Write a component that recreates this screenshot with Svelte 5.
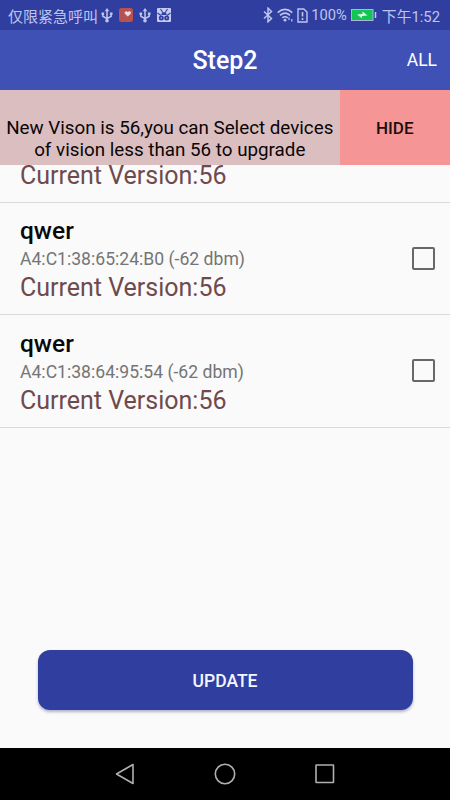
<script lang="ts">
  interface IDevice {
    name: string;
    mac: string;
    rssi: number;
    version: number;
    checked: boolean;
  }

  // version of the row that is scrolled under the notice
  let scrolledVersion = 56;
  let devices: IDevice[] = [
    { name: "qwer", mac: "A4:C1:38:65:24:B0", rssi: -62, version: 56, checked: false },
    { name: "qwer", mac: "A4:C1:38:64:95:54", rssi: -62, version: 56, checked: false },
  ];
  let showNotice = true;

  function selectAll() {
    devices = devices.map((d) => ({ ...d, checked: true }));
  }
</script>

{#snippet usb()}
  <svg width="12" height="15" viewBox="0 0 12 15">
    <path d="M6 2v11M1.800 6v2.200L6 10.600l4.200-2.400V6" fill="none" stroke="currentColor" stroke-width="1.500" />
    <path d="M6 0l2.300 3.300H3.700zM.5 4.600h2.600v2.500H.5zM8.900 4.600h2.600v2.500H8.900z" fill="currentColor" />
    <circle cx="6" cy="12.800" r="1.800" fill="currentColor" />
  </svg>
{/snippet}

<div class="screen">
  <div class="status">
    <div class="status-left">
      <span class="carrier">仅限紧急呼叫</span>
      {@render usb()}
      <svg width="14" height="14" viewBox="0 0 14 14">
        <rect width="14" height="14" rx="2.500" fill="#b6524f" />
        <path d="M8.800 8.600L5.900 5.700c-1.100-1.900 1.400-3.600 2.900-1.700 1.500-1.900 4-.2 2.900 1.700z" fill="#f0dce6" />
      </svg>
      {@render usb()}
      <svg width="14" height="14" viewBox="0 0 14 14">
        <rect width="14" height="14" rx="1" fill="#c5cbf0" />
        <path d="M3.500 1l2 3M10.500 1l-2 3M.5 5l3.500 2.500M13.500 5L10 7.500" fill="none" stroke="#303f9f" stroke-width="1.100" />
        <path d="M5 4.200h4l.7 2.800H4.300z" fill="#303f9f" />
        <circle cx="4.300" cy="10" r="2.500" fill="#303f9f" />
        <circle cx="9.700" cy="10" r="2.500" fill="#303f9f" />
        <circle cx="4.300" cy="10" r=".7" fill="#c5cbf0" />
        <circle cx="9.700" cy="10" r=".7" fill="#c5cbf0" />
      </svg>
    </div>
    <div class="status-right">
      <svg width="10" height="16" viewBox="0 0 10 16">
        <path d="M1 4.500l7.500 7L5 14.800V1.200l3.500 3.300L1 11.500" fill="none" stroke="currentColor" stroke-width="1.500" />
      </svg>
      <svg class="wifi" width="17" height="14" viewBox="0 0 17 14">
        <path
          d="M.7 4.600q7.300-6.400 14.600 0M3 7.300q5-4.400 10 0M5.300 9.900q2.700-2.300 5.400 0"
          fill="none"
          stroke="currentColor"
          stroke-width="1.600"
        />
        <circle cx="8" cy="12.200" r="1.400" fill="currentColor" />
        <path d="M12 9.500v2.500M14.800 11v2.500" stroke="currentColor" stroke-width="1.200" />
      </svg>
      <svg class="sim" width="11" height="15" viewBox="0 0 11 15">
        <path d="M1 1h5.800L10 4v10H1z" fill="none" stroke="currentColor" stroke-width="1.400" />
        <path d="M5.500 4v4.500M5.500 10v2" stroke="currentColor" stroke-width="1.600" />
      </svg>
      <span class="percent">100%</span>
      <svg class="battery" width="26" height="12" viewBox="0 0 26 12">
        <rect x=".5" y=".5" width="21.500" height="11" fill="#12c653" stroke="#a9b5dc" />
        <path d="M6 5.500l5.500-.5V2.500l5 4-5.500.4v2.400z" fill="#e4f8ee" />
        <path d="M24.500 3v6" stroke="#c5cbf0" stroke-width="1.500" />
      </svg>
      <span class="time">下午1:52</span>
    </div>
  </div>

  <header>
    <h1>Step2</h1>
    <button class="all" on:click={selectAll}>ALL</button>
  </header>

  {#if showNotice}
    <div class="notice">
      <p>New Vison is 56,you can Select devices<br />of vision less than 56 to upgrade</p>
      <button class="hide" on:click={() => (showNotice = false)}>HIDE</button>
    </div>
  {/if}

  <ul>
    <li class="scrolled">
      <span class="version">Current Version:{scrolledVersion}</span>
    </li>
    {#each devices as device}
      <li>
        <div class="info">
          <h2>{device.name}</h2>
          <span class="mac">{device.mac} ({device.rssi} dbm)</span>
          <span class="version">Current Version:{device.version}</span>
        </div>
        <input type="checkbox" aria-label={device.mac} bind:checked={device.checked} />
      </li>
    {/each}
  </ul>

  <div class="action">
    <button class="update">UPDATE</button>
  </div>

  <nav>
    <svg width="20" height="22" viewBox="0 0 20 22">
      <path d="M18 1.500v19L1.500 11z" />
    </svg>
    <svg width="22" height="22" viewBox="0 0 22 22">
      <circle cx="11" cy="11" r="9.700" />
    </svg>
    <svg width="20" height="20" viewBox="0 0 20 20">
      <rect x="1" y="1" width="17.500" height="17.500" rx=".5" />
    </svg>
  </nav>
</div>

<style>
  :global(body) {
    margin: 0;
  }
  .screen {
    display: flex;
    flex-direction: column;
    width: 450px;
    height: 800px;
    overflow: hidden;
    background: #fafafa;
    font-family: Roboto, "Noto Sans CJK SC", sans-serif;
  }
  button {
    border: none;
    font-family: inherit;
    cursor: pointer;
  }
  h1,
  h2,
  p,
  ul {
    margin: 0;
    padding: 0;
  }

  .status {
    display: flex;
    justify-content: space-between;
    box-sizing: border-box;
    height: 30px;
    padding: 0 10px 0 8px;
    background: #303f9f;
    color: #bdc5ef;
    white-space: nowrap;
  }
  .status-left,
  .status-right {
    display: flex;
    align-items: center;
  }
  .status-left {
    gap: 6px;
  }
  .carrier {
    font-size: 15px;
    margin-right: -3px;
  }
  .wifi {
    margin-left: 4px;
  }
  .sim {
    margin: 0 3px 0 3px;
  }
  .percent {
    font-size: 14.700px;
  }
  .battery {
    margin: 0 5px 0 4px;
  }
  .time {
    font-size: 14.800px;
  }

  header {
    display: grid;
    grid-template-columns: 1fr auto 1fr;
    align-items: center;
    height: 60px;
    background: #3f51b5;
    color: #fff;
  }
  header h1 {
    grid-column: 2;
    padding-top: 1px;
    font-size: 25px;
    font-weight: 500;
  }
  .all {
    justify-self: end;
    padding: 0 13px 0;
    background: none;
    color: #fff;
    font-size: 17.500px;
  }

  .notice {
    display: flex;
    height: 75px;
    flex: none;
  }
  .notice p {
    display: flex;
    align-items: flex-end;
    justify-content: center;
    width: 339.500px;
    box-sizing: border-box;
    padding-bottom: 4px;
    background: #dbbfc0;
    color: #0a0506;
    font-size: 18.800px;
    line-height: 22px;
    text-align: center;
    white-space: nowrap;
  }
  .hide {
    flex: 1;
    padding: 0;
    background: #f59595;
    color: #1c0d0e;
    font-size: 17px;
    font-weight: 500;
  }

  ul {
    flex: 1;
    list-style: none;
  }
  li {
    display: flex;
    align-items: center;
    justify-content: space-between;
    box-sizing: border-box;
    height: 112.500px;
    padding: 0 15px 0 20px;
    border-bottom: 1px solid #dadada;
  }
  .scrolled {
    align-items: flex-end;
    height: 37.500px;
    padding-bottom: 9px;
  }
  .info {
    display: flex;
    flex-direction: column;
    padding-top: 4px;
  }
  li h2 {
    color: #06090a;
    font-size: 24.500px;
    font-weight: 500;
    line-height: 32px;
  }
  .mac {
    color: #757575;
    font-size: 17.600px;
    line-height: 24px;
  }
  .version {
    color: #6f4a4d;
    font-size: 25px;
    line-height: 34px;
  }
  input {
    appearance: none;
    width: 23px;
    height: 23px;
    margin: 0;
    border: 2px solid #686868;
    border-radius: 2px;
  }
  input:checked {
    background: #303f9f;
  }

  .action {
    padding: 0 37.500px 37.500px;
  }
  .update {
    display: block;
    width: 100%;
    height: 60px;
    padding: 2px 0 0;
    border-radius: 12px;
    background: #303f9f;
    box-shadow: 0 2px 3px rgba(48, 40, 110, 0.35);
    color: #f4f6ff;
    font-size: 17.500px;
    font-weight: 500;
  }

  nav {
    display: flex;
    align-items: center;
    justify-content: center;
    gap: 79px;
    height: 52.500px;
    flex: none;
    background: #000;
  }
  nav svg {
    fill: none;
    stroke: #b0b0b0;
    stroke-width: 1.600;
    stroke-linejoin: round;
  }
</style>
